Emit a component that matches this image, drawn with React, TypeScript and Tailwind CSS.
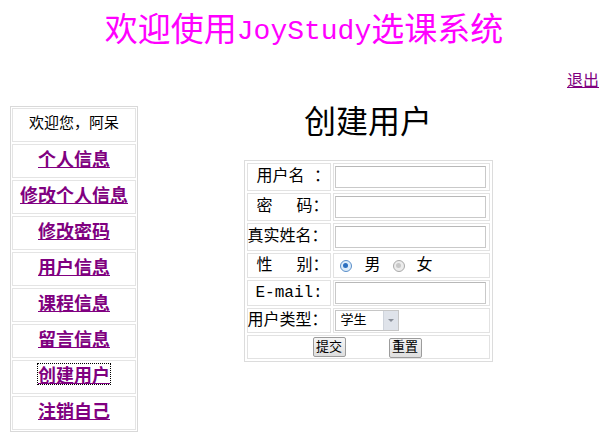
const menu = ["个人信息", "修改个人信息", "修改密码", "用户信息", "课程信息", "留言信息", "创建用户", "注销自己"]

function Field() {
  return <div className="h-[22px] w-[151px] ml-[1px] border border-[#c9c9c9] border-t-[#b8b8b8] bg-white" />
}

function Radio({ checked }: { checked?: boolean }) {
  return (
    <span
      className={
        "inline-flex w-[12px] h-[12px] rounded-full border items-center justify-center " +
        (checked ? "border-[#5b8fc9] bg-[#dcecfa]" : "border-[#a9a9a9] bg-[#ececec]")
      }
    >
      <span className={"w-[5px] h-[5px] rounded-full " + (checked ? "bg-[#2b6fc0]" : "bg-[#c8c8c8]")} />
    </span>
  )
}

function Btn({ label }: { label: string }) {
  return (
    <span className="inline-flex items-center justify-center h-[20px] w-[33px] border border-[#9c9c9c] rounded-[2px] bg-gradient-to-b from-[#f6f6f6] to-[#dedede] text-[13px] leading-none text-black">
      {label}
    </span>
  )
}

export default function App() {
  const rowCls = "flex gap-[2px]"
  const labelCls = "w-[84px] border border-[#e2e2e2] flex items-center whitespace-nowrap text-[16px] text-black"
  const valueCls = "flex-1 border border-[#e2e2e2] flex items-center"

  return (
    <div className="w-[608px] h-[441px] bg-white overflow-hidden" style={{ fontFamily: '"Noto Sans CJK SC", sans-serif' }}>
      <div
        className="h-[64px] flex items-center justify-center text-[33px] text-[#ff00ff] leading-none"
        style={{ fontFamily: '"Liberation Mono", "Noto Sans CJK SC", monospace' }}
      >
        欢迎使用<span className="text-[28px]">JoyStudy</span>选课系统
      </div>
      <div className="h-[30px] flex items-center justify-end pr-[9px]">
        <a className="text-[16px] text-[#800080] underline leading-none">退出</a>
      </div>

      <div className="flex px-[10px] mt-[12px]">
        <div className="w-[128px] border border-[#d9d9d9] p-[1px] flex flex-col gap-[2px]">
          <div className="h-[34px] border border-[#e4e4e4] flex items-center justify-center pb-[5px] text-[15px] text-black">
            欢迎您，阿呆
          </div>
          {menu.map((m) => (
            <div key={m} className="h-[34px] border border-[#e4e4e4] flex items-center justify-center pb-[6px]">
              <a
                className={
                  "text-[18px] font-bold text-[#800080] underline leading-[20px] " +
                  (m === "创建用户" ? "outline outline-1 outline-dotted outline-black" : "")
                }
              >
                {m}
              </a>
            </div>
          ))}
        </div>

        <div className="flex-1 flex flex-col items-center">
          <h2 className="text-[32px] leading-[32px] -mt-[3px] text-black font-normal">创建用户</h2>
          <div
            className="mt-[25px] w-[249px] border border-[#dcdcdc] p-[2px] flex flex-col gap-[2px]"
            style={{ fontFamily: '"Liberation Mono", "Noto Sans CJK SC", monospace' }}
          >
            <div className={rowCls + " h-[28px]"}>
              <div className={labelCls + " pl-[9px]"}>用户名 ：</div>
              <div className={valueCls}><Field /></div>
            </div>
            <div className={rowCls + " h-[28px]"}>
              <div className={labelCls + " pl-[9px]"}>
                <span>密</span>
                <span className="ml-[24px]">码：</span>
              </div>
              <div className={valueCls}><Field /></div>
            </div>
            <div className={rowCls + " h-[28px]"}>
              <div className={labelCls}>真实姓名：</div>
              <div className={valueCls}><Field /></div>
            </div>
            <div className={rowCls + " h-[25px]"}>
              <div className={labelCls + " pl-[9px]"}>
                <span>性</span>
                <span className="ml-[24px]">别：</span>
              </div>
              <div className={valueCls + " pl-[6px] text-[16px] text-black"}>
                <Radio checked />
                <span className="ml-[13px]">男</span>
                <span className="ml-[12px] inline-flex"><Radio /></span>
                <span className="ml-[12px]">女</span>
              </div>
            </div>
            <div className={rowCls + " h-[26px]"}>
              <div className={labelCls + " pl-[8px] text-[13px]"}>E-mail:</div>
              <div className={valueCls}><Field /></div>
            </div>
            <div className={rowCls + " h-[25px]"}>
              <div className={labelCls}>用户类型：</div>
              <div className={valueCls}>
                <div className="ml-[1px] h-[21px] w-[64px] border border-[#c6c6c6] bg-white flex items-center">
                  <span className="flex-1 pl-[5px] text-[13px] text-black leading-none">学生</span>
                  <span className="w-[15px] h-full bg-[#dfe3ea] border-l border-[#cfd4dc] flex items-center justify-center">
                    <span className="w-0 h-0 border-l-[3px] border-r-[3px] border-t-[3px] border-l-transparent border-r-transparent border-t-[#8a8f99]" />
                  </span>
                </div>
              </div>
            </div>
            <div className="h-[24px] border border-[#e2e2e2] flex items-center pl-[65px]">
              <Btn label="提交" />
              <span className="ml-[43px]"><Btn label="重置" /></span>
            </div>
          </div>
        </div>
      </div>
    </div>
  )
}
